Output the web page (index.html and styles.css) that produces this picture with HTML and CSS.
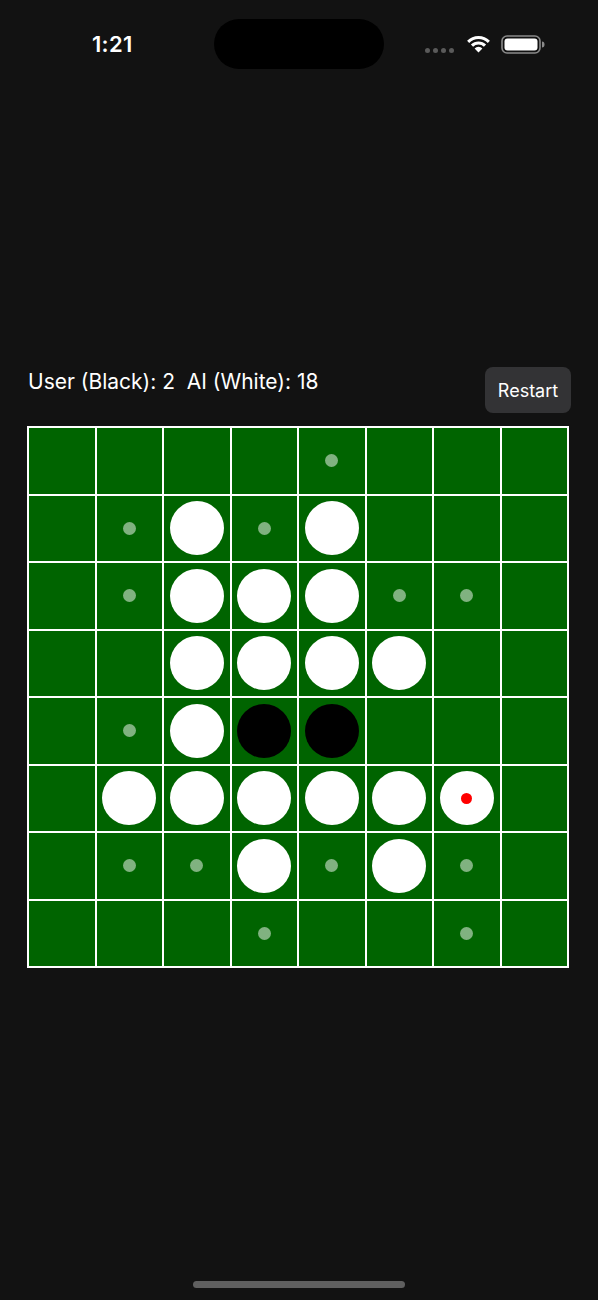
FILE: index.html
```html
<!DOCTYPE html>
<html>
<head>
<meta charset="utf-8">
<link rel="stylesheet" href="styles.css">
</head>
<body>
<div class="screen">
  <div class="statusbar">
    <div class="sb-left"><span class="time">1:21</span></div>
    <div class="island"></div>
    <div class="sb-right">
      <div class="signal"><i></i><i></i><i></i><i></i></div>
      <svg class="wifi" width="27" height="19" viewBox="0 0 27 19">
        <path d="M13.5 18.5 L9.6 14.4 A5.6 5.6 0 0 1 17.4 14.4 Z" fill="#fff"/>
        <path d="M5.9 10.6 A10.8 10.8 0 0 1 21.1 10.6 L18.9 12.8 A7.7 7.7 0 0 0 8.1 12.8 Z" fill="#fff"/>
        <path d="M2.1 6.8 A16.2 16.2 0 0 1 24.9 6.8 L22.8 8.9 A13.2 13.2 0 0 0 4.2 8.9 Z" fill="#fff"/>
      </svg>
      <svg class="battery" width="44" height="19" viewBox="0 0 44 19">
        <rect x="1" y="1" width="38" height="17" rx="5" fill="none" stroke="#8a8a8a" stroke-width="1.6"/>
        <rect x="3.5" y="3.5" width="33" height="12" rx="3" fill="#fff"/>
        <path d="M41 6.5 A2.5 3 0 0 1 41 12.5 Z" fill="#8a8a8a"/>
      </svg>
    </div>
  </div>

  <main class="game">
    <div class="header">
      <div class="score">User (Black): 2&nbsp;&nbsp;AI (White): 18</div>
      <button class="restart">Restart</button>
    </div>

    <div class="board">
      <div class="cell"></div><div class="cell"></div><div class="cell"></div><div class="cell"></div><div class="cell"><span class="hint"></span></div><div class="cell"></div><div class="cell"></div><div class="cell"></div>

      <div class="cell"></div><div class="cell"><span class="hint"></span></div><div class="cell"><span class="disc white"></span></div><div class="cell"><span class="hint"></span></div><div class="cell"><span class="disc white"></span></div><div class="cell"></div><div class="cell"></div><div class="cell"></div>

      <div class="cell"></div><div class="cell"><span class="hint"></span></div><div class="cell"><span class="disc white"></span></div><div class="cell"><span class="disc white"></span></div><div class="cell"><span class="disc white"></span></div><div class="cell"><span class="hint"></span></div><div class="cell"><span class="hint"></span></div><div class="cell"></div>

      <div class="cell"></div><div class="cell"></div><div class="cell"><span class="disc white"></span></div><div class="cell"><span class="disc white"></span></div><div class="cell"><span class="disc white"></span></div><div class="cell"><span class="disc white"></span></div><div class="cell"></div><div class="cell"></div>

      <div class="cell"></div><div class="cell"><span class="hint"></span></div><div class="cell"><span class="disc white"></span></div><div class="cell"><span class="disc black"></span></div><div class="cell"><span class="disc black"></span></div><div class="cell"></div><div class="cell"></div><div class="cell"></div>

      <div class="cell"></div><div class="cell"><span class="disc white"></span></div><div class="cell"><span class="disc white"></span></div><div class="cell"><span class="disc white"></span></div><div class="cell"><span class="disc white"></span></div><div class="cell"><span class="disc white"></span></div><div class="cell"><span class="disc white"><span class="last"></span></span></div><div class="cell"></div>

      <div class="cell"></div><div class="cell"><span class="hint"></span></div><div class="cell"><span class="hint"></span></div><div class="cell"><span class="disc white"></span></div><div class="cell"><span class="hint"></span></div><div class="cell"><span class="disc white"></span></div><div class="cell"><span class="hint"></span></div><div class="cell"></div>

      <div class="cell"></div><div class="cell"></div><div class="cell"></div><div class="cell"><span class="hint"></span></div><div class="cell"></div><div class="cell"></div><div class="cell"><span class="hint"></span></div><div class="cell"></div>
    </div>
  </main>

  <div class="home-indicator"></div>
</div>
</body>
</html>
```

FILE: styles.css
```css
html, body {
  margin: 0;
  padding: 0;
  background: #121212;
}

.screen {
  width: 598px;
  height: 1300px;
  display: flex;
  flex-direction: column;
  font-family: Inter, "Liberation Sans", sans-serif;
  color: #fff;
  background: #121212;
}

.statusbar {
  display: flex;
  align-items: center;
  height: 50px;
  padding-top: 19px;
}

.sb-left {
  width: 214px;
  box-sizing: border-box;
  padding-left: 92px;
}

.time {
  font-size: 22px;
  font-weight: 600;
  letter-spacing: 0.3px;
}

.island {
  width: 170px;
  height: 50px;
  border-radius: 25px;
  background: #000;
}

.sb-right {
  display: flex;
  align-items: center;
  padding-left: 41px;
}

.signal {
  display: flex;
  gap: 3px;
  margin-top: 12px;
}

.signal i {
  width: 5px;
  height: 5px;
  border-radius: 50%;
  background: #5a5a5a;
}

.wifi {
  margin-left: 11px;
  margin-top: -1px;
}

.battery {
  margin-left: 9px;
}

.game {
  display: flex;
  flex-direction: column;
  padding: 298px 0 0 27px;
  width: 544px;
}

.header {
  display: flex;
  justify-content: space-between;
  align-items: flex-start;
  height: 46px;
}

.score {
  font-size: 21px;
  line-height: 24px;
  margin-top: 3px;
  margin-left: 1px;
}

.restart {
  width: 86px;
  height: 46px;
  border: none;
  border-radius: 8px;
  background: #333335;
  color: #fff;
  font-family: Inter, "Liberation Sans", sans-serif;
  font-size: 18px;
  padding: 0;
}

.board {
  margin-top: 13px;
  width: 542px;
  height: 542px;
  box-sizing: border-box;
  display: grid;
  grid-template-columns: repeat(8, 1fr);
  grid-template-rows: repeat(8, 1fr);
  gap: 2px;
  padding: 2px;
  background: #fff;
}

.cell {
  background: #006400;
  display: flex;
  align-items: center;
  justify-content: center;
}

.disc {
  width: 54px;
  height: 54px;
  border-radius: 50%;
  display: flex;
  align-items: center;
  justify-content: center;
}

.disc.white { background: #fff; }
.disc.black { background: #000; }

.last {
  width: 11px;
  height: 11px;
  border-radius: 50%;
  background: #ff0000;
}

.hint {
  width: 13px;
  height: 13px;
  border-radius: 50%;
  background: rgba(255, 255, 255, 0.5);
}

.home-indicator {
  margin: auto auto 12px;
  width: 212px;
  height: 7px;
  border-radius: 4px;
  background: #5f5f5f;
}
```
